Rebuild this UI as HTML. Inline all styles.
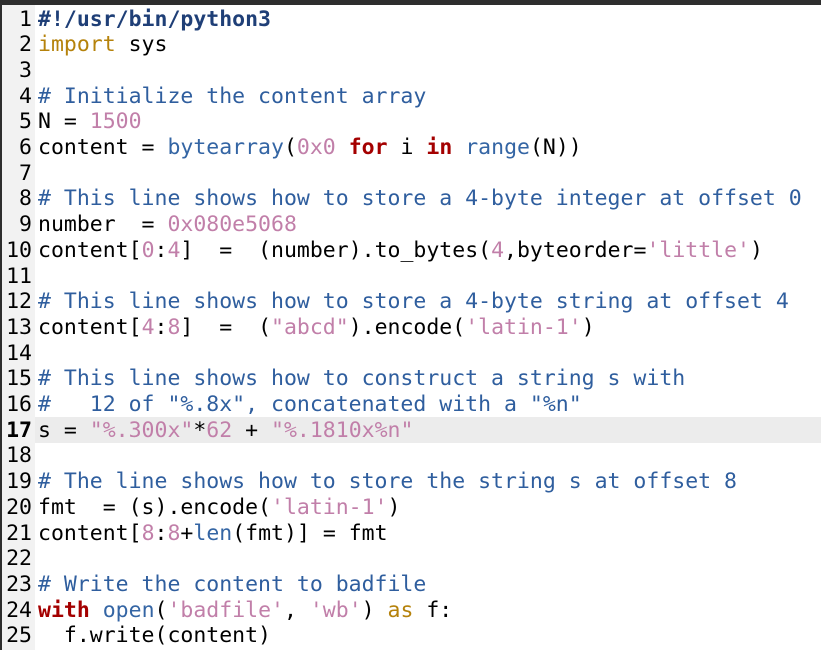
<!DOCTYPE html>
<html><head><meta charset="utf-8"><style>
html,body{margin:0;padding:0;width:821px;height:650px;overflow:hidden;background:#fff}
.top{position:absolute;left:0;top:0;width:821px;height:5px;background:#2e2e2e}
.lft{position:absolute;left:0;top:0;width:2px;height:650px;background:#2e2e2e}
.gut{position:absolute;left:2px;top:5px;width:33px;height:645px;background:#f2f2f2}
.hl{position:absolute;left:35px;top:417px;width:786px;height:25.7px;background:#ececec}
pre{position:absolute;margin:0;top:6.5px;font-family:"DejaVu Sans Mono","Liberation Mono",monospace;font-size:21.5px;line-height:25.7px;color:#000}
.nums{left:2px;width:30px;text-align:right}
.code{left:38px}
.c{color:#2f5e9e}.s{color:#c17fa9}.k{color:#a40000;font-weight:bold}.i{color:#b5820b}.b{color:#3465a4}.sh{color:#1f3f77;font-weight:bold}
</style></head><body>
<div class="top"></div><div class="lft"></div><div class="gut"></div><div class="hl"></div>
<pre class="nums">1
2
3
4
5
6
7
8
9
10
11
12
13
14
15
16
<b>17</b>
18
19
20
21
22
23
24
25</pre>
<pre class="code"><span class="sh">#!/usr/bin/python3</span>
<span class="i">import</span> sys

<span class="c"># Initialize the content array</span>
N = <span class="s">1500</span>
content = <span class="b">bytearray</span>(<span class="s">0x0</span> <span class="k">for</span> i <span class="k">in</span> <span class="b">range</span>(N))

<span class="c"># This line shows how to store a 4-byte integer at offset 0</span>
number  = <span class="s">0x080e5068</span>
content[<span class="s">0</span>:<span class="s">4</span>]  =  (number).to_bytes(<span class="s">4</span>,byteorder=<span class="s">'little'</span>)

<span class="c"># This line shows how to store a 4-byte string at offset 4</span>
content[<span class="s">4</span>:<span class="s">8</span>]  =  (<span class="s">"abcd"</span>).encode(<span class="s">'latin-1'</span>)

<span class="c"># This line shows how to construct a string s with</span>
<span class="c">#   12 of "%.8x", concatenated with a "%n"</span>
s = <span class="s">"%.300x"</span>*<span class="s">62</span> + <span class="s">"%.1810x%n"</span>

<span class="c"># The line shows how to store the string s at offset 8</span>
fmt  = (s).encode(<span class="s">'latin-1'</span>)
content[<span class="s">8</span>:<span class="s">8</span>+<span class="b">len</span>(fmt)] = fmt

<span class="c"># Write the content to badfile</span>
<span class="k">with</span> <span class="b">open</span>(<span class="s">'badfile'</span>, <span class="s">'wb'</span>) <span class="i">as</span> f:
  f.write(content)</pre>
</body></html>
